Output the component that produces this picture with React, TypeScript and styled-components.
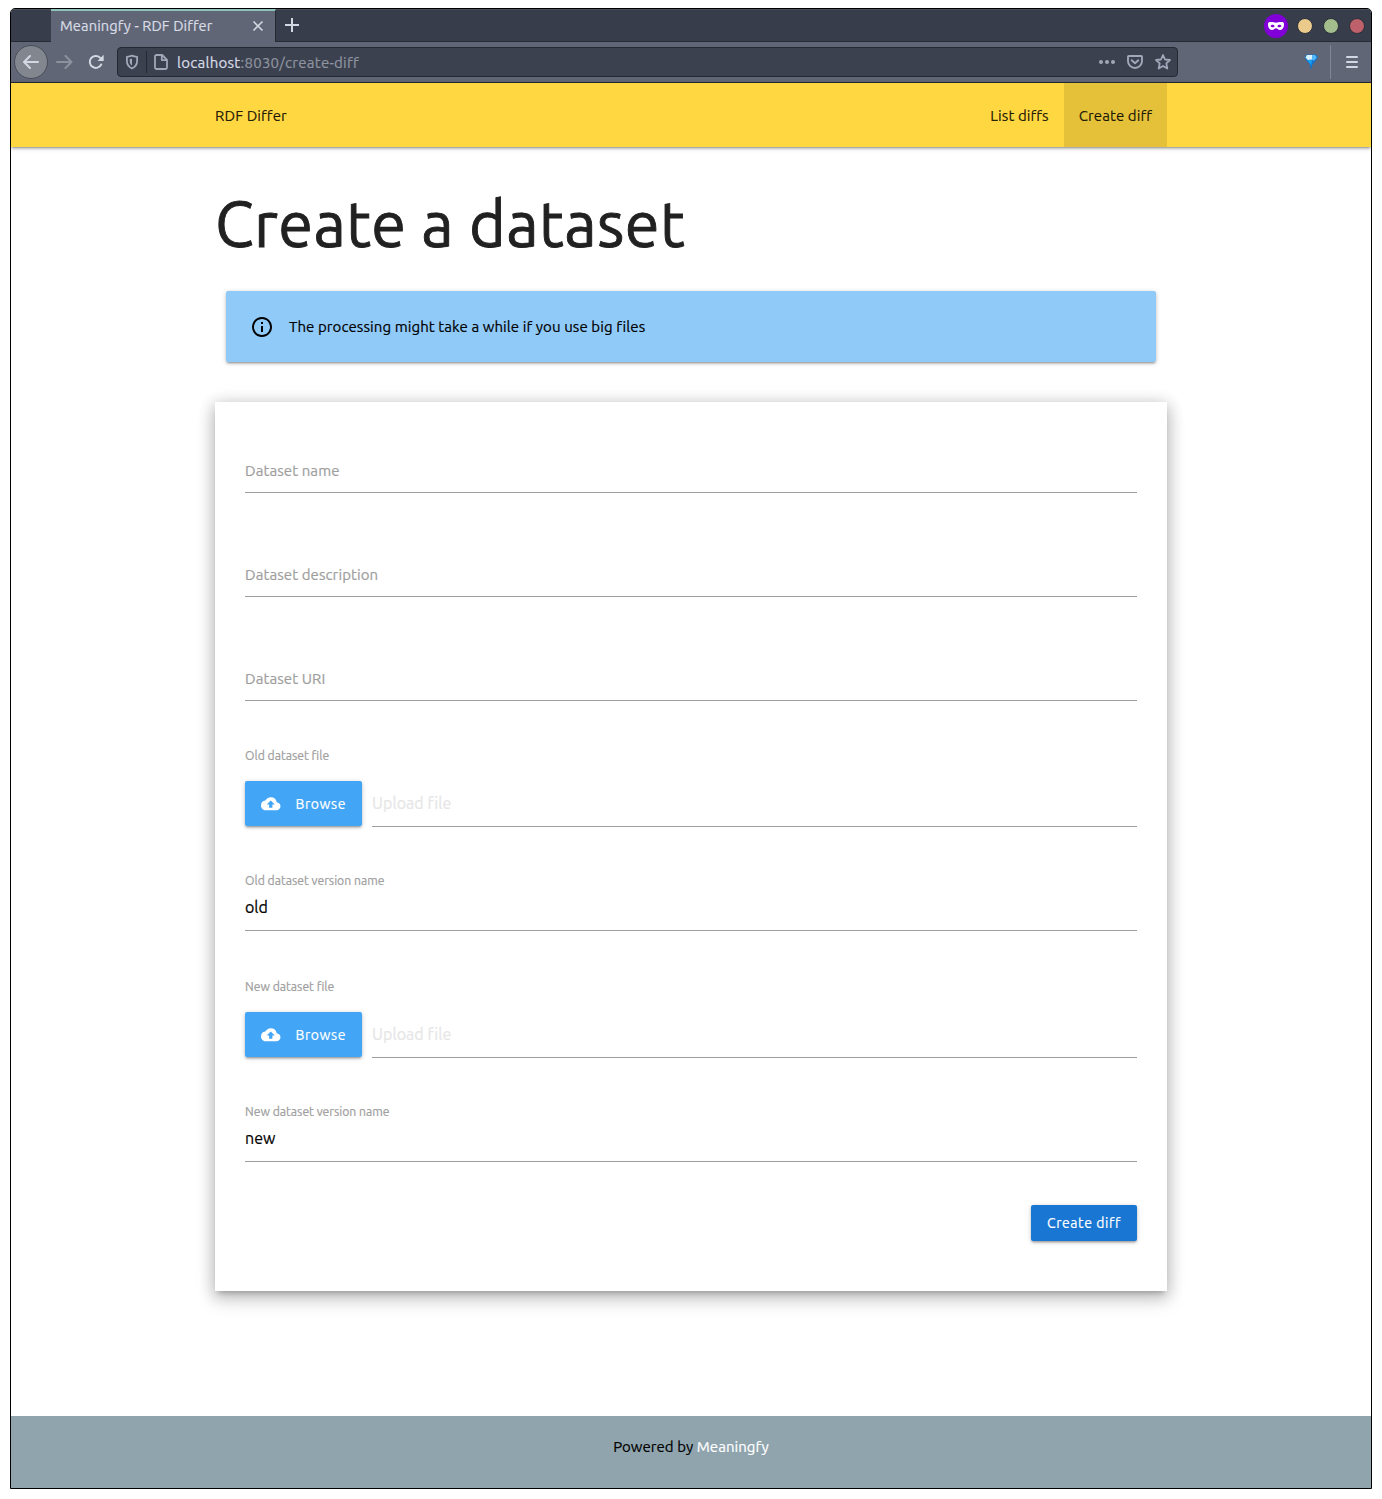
import React from 'react';
import styled, { createGlobalStyle } from 'styled-components';
import { MdCloudUpload, MdInfoOutline } from 'react-icons/md';

const GlobalStyle = createGlobalStyle`
  *, *::before, *::after { box-sizing: border-box; }
  body {
    margin: 0;
    background: #fff;
    color: rgba(0, 0, 0, 0.87);
    font-family: Ubuntu, "Noto Sans", "Open Sans", sans-serif;
    font-size: 15px;
    line-height: 22px;
    -webkit-text-stroke: 0.2px;
  }
  svg { display: block; flex: none; }
`;

const shadow1 =
  '0 2px 2px 0 rgba(0,0,0,0.14), 0 3px 1px -2px rgba(0,0,0,0.12), 0 1px 5px 0 rgba(0,0,0,0.2)';
const shadow3 =
  '0 8px 17px 2px rgba(0,0,0,0.14), 0 3px 14px 2px rgba(0,0,0,0.12), 0 5px 5px -3px rgba(0,0,0,0.2), 0 0 20px rgba(0,0,0,0.06)';

const Window = styled.div`
  display: flex;
  flex-direction: column;
  width: 1362px;
  height: 1481px;
  margin: 8px 10px 10px;
  border: 1px solid #000;
  border-radius: 5px 5px 0 0;
  overflow: hidden;
  background: #fff;
`;

const TabStrip = styled.div`
  display: flex;
  height: 33px;
  flex: none;
  padding-left: 40px;
  background: #373d4a;
  border-bottom: 1px solid #252a35;
  box-shadow: inset 0 1px 0 #4a505c;
`;

const Tab = styled.div`
  display: flex;
  align-items: center;
  justify-content: space-between;
  width: 225px;
  height: 33px;
  padding: 0 11px 1px 9px;
  background: #606675;
  border-top: 2px solid #8fc1bd;
  border-right: 1px solid #252a35;
  color: #d8dce6;
  font-size: 14.67px;
  letter-spacing: 0.1px;
`;

const NewTab = styled.div`
  display: flex;
  align-items: center;
  padding-left: 8px;
`;

const WindowControls = styled.div`
  display: flex;
  align-items: center;
  margin-left: auto;
  padding: 1px 6px 0 0;
`;

const PrivateBadge = styled.div`
  display: grid;
  place-items: center;
  width: 24px;
  height: 24px;
  margin-right: 9px;
  border-radius: 50%;
  background: #8000d7;
`;

const ControlDot = styled.div<{ $color: string }>`
  width: 16px;
  height: 16px;
  border: 1px solid #2b303b;
  border-radius: 50%;
  background: ${(p) => p.$color};
  & + & { margin-left: 10px; }
`;

const Toolbar = styled.div`
  display: flex;
  align-items: center;
  height: 41px;
  flex: none;
  background: #606675;
  border-bottom: 1px solid #252a35;
`;

const BackButton = styled.div`
  display: grid;
  place-items: center;
  width: 34px;
  height: 34px;
  margin: 0 7px 0 3px;
  border: 1px solid #484d59;
  border-radius: 50%;
  background: #82868f;
`;

const ReloadIcon = styled.svg`
  margin: 0 13px 0 15px;
`;

const AddressBar = styled.div`
  display: flex;
  align-items: center;
  width: 1061px;
  height: 30px;
  padding: 0 6px;
  border: 1px solid #232833;
  border-radius: 4px;
  background: #3c4150;
`;

const BarDivider = styled.div`
  width: 1px;
  height: 22px;
  margin: 0 6px;
  background: #232833;
`;

const Address = styled.div`
  margin: 1px auto 0 8px;
  color: #8f949f;
  font-size: 15px;
  letter-spacing: 0.27px;
  strong { color: #d8dce6; font-weight: inherit; }
`;

const AddressActions = styled.div`
  display: flex;
  align-items: center;
  gap: 12px;
`;

const ToolbarEnd = styled.div`
  display: flex;
  align-items: center;
  margin-left: auto;
  padding-right: 12px;
`;

const ToolbarDivider = styled.div`
  width: 1px;
  height: 34px;
  margin: 0 14px 0 11px;
  background: #80858f;
`;

const Nav = styled.nav`
  flex: none;
  height: 64px;
  background: #ffd740;
  box-shadow: ${shadow1};
`;

const Container = styled.div`
  width: 952px;
  margin: 0 auto;
`;

const NavRow = styled(Container)`
  display: flex;
  line-height: 65px;
  height: 64px;
  letter-spacing: 0.09px;
`;

const Brand = styled.span`
  margin-right: auto;
`;

const NavLink = styled.a<{ $active?: boolean }>`
  padding: 0 15px;
  background: ${(p) => (p.$active ? 'rgba(0,0,0,0.1)' : 'transparent')};
`;

const Main = styled.main`
  display: flow-root;
  flex: 1;
`;

const Title = styled.h1`
  margin: 42px 0 33px;
  color: #212121;
  font-size: 63px;
  font-weight: 400;
  line-height: 69px;
  letter-spacing: 0.42px;
  white-space: nowrap;
  -webkit-text-stroke: 0.9px;
`;

const Notice = styled.div`
  display: flex;
  align-items: center;
  gap: 15px;
  height: 71px;
  margin: 0 11px 40px;
  padding: 0 24px;
  border-radius: 2px;
  background: #90caf9;
  box-shadow: ${shadow1};
  color: #000;
  letter-spacing: 0.09px;
`;

const Form = styled.form`
  padding: 45px 30px 50px;
  box-shadow: ${shadow3};
`;

const EmptyField = styled.div`
  height: 46px;
  margin-bottom: 58px;
  border-bottom: 1px solid #9e9e9e;
  color: #9e9e9e;
  line-height: 48px;
  letter-spacing: 0.09px;
  &:nth-child(3) { margin-bottom: 45px; }
`;

const SmallLabel = styled.div`
  height: 18px;
  color: #9e9e9e;
  font-size: 12.2px;
  line-height: 19px;
`;

const FileRow = styled.div`
  display: flex;
  gap: 10px;
  margin: 17px 0 44px;
`;

const Button = styled.button<{ $primary?: boolean }>`
  display: flex;
  align-items: center;
  gap: 15px;
  height: ${(p) => (p.$primary ? 36 : 45)}px;
  width: ${(p) => (p.$primary ? 106 : 117)}px;
  margin: ${(p) => (p.$primary ? '0 0 0 auto' : '0')};
  padding: 0 16px;
  border: 0;
  border-radius: 2px;
  background: ${(p) => (p.$primary ? '#1976d2' : '#42a5f5')};
  box-shadow: ${shadow1};
  color: #fff;
  font: inherit;
  font-size: 14px;
  letter-spacing: 0.58px;
  white-space: nowrap;
`;

const FilePath = styled.div`
  flex: 1;
  height: 46px;
  border-bottom: 1px solid #9e9e9e;
  color: #e6e6e6;
  font-size: 16px;
  line-height: 45px;
  letter-spacing: 0.06px;
`;

const Value = styled.div<{ $after: number }>`
  height: 42px;
  margin-bottom: ${(p) => p.$after}px;
  border-bottom: 1px solid #9e9e9e;
  color: #000;
  font-size: 16px;
  line-height: 36px;
`;

const Footer = styled.footer`
  flex: none;
  height: 72px;
  padding-top: 20px;
  background: #90a4ae;
  color: #000;
  text-align: center;
  letter-spacing: 0.05px;
  a { color: #fff; }
`;

function FileField({ label }: { label: string }) {
  return (
    <>
      <SmallLabel>{label}</SmallLabel>
      <FileRow>
        <Button type="button">
          <MdCloudUpload size={19.5} />
          Browse
        </Button>
        <FilePath>Upload file</FilePath>
      </FileRow>
    </>
  );
}

function VersionField({ label, value, after }: { label: string; value: string; after: number }) {
  return (
    <>
      <SmallLabel>{label}</SmallLabel>
      <Value $after={after}>{value}</Value>
    </>
  );
}

function BrowserChrome() {
  return (
    <>
      <TabStrip>
        <Tab>
          Meaningfy - RDF Differ
          <svg width="12" height="12" viewBox="0 0 12 12" stroke="#d3d7e2" strokeWidth="1.6">
            <path d="M1.5 1.5 10.5 10.5M10.5 1.5 1.5 10.5" />
          </svg>
        </Tab>
        <NewTab>
          <svg width="16" height="16" viewBox="0 0 16 16" stroke="#d3d7e2" strokeWidth="2">
            <path d="M8 1v14M1 8h14" />
          </svg>
        </NewTab>
        <WindowControls>
          <PrivateBadge>
            <svg width="16" height="8" viewBox="0 0 16 8">
              <path
                fill="#fff"
                fillRule="evenodd"
                d="M0 2C0 .6 1 .1 2.300.1 4.800 0 6.500.8 8 .8S11.200 0 13.700.1C15 .1 16 .6 16 2c0 3.500-1.500 6-4 6-2 0-2.800-1.700-4-1.700S6 8 4 8C1.500 8 0 5.500 0 2ZM2.500 4.100C3 5 3.900 5.400 4.800 5.300 5.800 5.200 6.400 4.600 6.600 4.200 6.100 3.300 5.300 2.800 4.400 2.800 3.500 2.800 2.800 3.400 2.500 4.100ZM13.500 4.100C13 5 12.100 5.400 11.200 5.300 10.200 5.200 9.600 4.600 9.400 4.200 9.900 3.300 10.700 2.800 11.600 2.800 12.500 2.800 13.200 3.400 13.500 4.100Z"
              />
            </svg>
          </PrivateBadge>
          <ControlDot $color="#ebcb8b" />
          <ControlDot $color="#a3be8c" />
          <ControlDot $color="#bf616a" />
        </WindowControls>
      </TabStrip>
      <Toolbar>
        <BackButton>
          <svg width="16" height="14" viewBox="0 0 16 14" fill="none" stroke="#d3d7e2" strokeWidth="2" strokeLinecap="round" strokeLinejoin="round">
            <path d="M15 7H1.500M7 1 1 7l6 6" />
          </svg>
        </BackButton>
        <svg width="18" height="14" viewBox="0 0 18 14" fill="none" stroke="#8d929f" strokeWidth="2" strokeLinecap="round" strokeLinejoin="round">
          <path d="M2 7h14.500M10.500 1l6 6-6 6" />
        </svg>
        <ReloadIcon width="16" height="16" viewBox="0 0 16 16" fill="none">
          <path d="M13.200 10.500A6 6 0 1 1 12 3.600L14 5.500" stroke="#d3d7e2" strokeWidth="2" strokeLinecap="round" />
          <path d="M15.700.8V7H9.500Z" fill="#d3d7e2" />
        </ReloadIcon>
        <AddressBar>
          <svg width="16" height="16" viewBox="0 0 16 16" fill="none" stroke="#a1a7b8">
            <path d="M8 1.600c1.700.8 3.400 1.100 5.100 1.200v4c0 3.400-1.800 6.200-5.100 7.700C4.700 13 2.900 10.200 2.900 6.800v-4C4.600 2.700 6.300 2.400 8 1.600Z" strokeWidth="1.800" strokeLinejoin="round" />
            <path d="M8 4.400v7.200C6.500 10.600 5.700 9 5.700 6.900V5C6.500 4.900 7.300 4.700 8 4.400Z" fill="#a1a7b8" stroke="none" />
          </svg>
          <BarDivider />
          <svg width="16" height="16" viewBox="0 0 16 16" fill="none" stroke="#a1a7b8" strokeWidth="1.800" strokeLinejoin="round">
            <path d="M3.500 1h5.700L14 5.800v7.700c0 .8-.7 1.500-1.500 1.500h-9C2.700 15 2 14.300 2 13.500v-11C2 1.700 2.700 1 3.500 1ZM8.800 1.200v4.900h5" />
          </svg>
          <Address>
            <strong>localhost</strong>:8030/create-diff
          </Address>
          <AddressActions>
            <svg width="16" height="16" viewBox="0 0 16 16" fill="#a1a7b8">
              <circle cx="2" cy="8" r="2" />
              <circle cx="8" cy="8" r="2" />
              <circle cx="14" cy="8" r="2" />
            </svg>
            <svg width="16" height="16" viewBox="0 0 16 16" fill="none" stroke="#a1a7b8" strokeWidth="1.900" strokeLinecap="round" strokeLinejoin="round">
              <path d="M1.800 2h12.400c.5 0 .8.300.8.800V7A7 7 0 0 1 1 7V2.800c0-.5.3-.8.8-.8ZM4.700 6.200 8 9.300l3.300-3.100" />
            </svg>
            <svg width="16" height="16" viewBox="0 0 16 16" fill="none" stroke="#a1a7b8" strokeWidth="1.800" strokeLinejoin="round">
              <path d="m8 1 2 4.500 5 .5-3.700 3.400 1 5.100L8 11.900l-4.300 2.600 1-5.100L1 6l5-.5Z" />
            </svg>
          </AddressActions>
        </AddressBar>
        <ToolbarEnd>
          <svg width="16" height="16" viewBox="0 0 16 16">
            <path d="M3.500.5h9.500L15 3.500 9 11.500v3H7.200v-3L1.500 3.500Z" fill="#1173cc" />
            <path d="M4 1h5.500L9 5.500 4.800 6 2.500 3.500Z" fill="#d8f1ff" />
            <path d="M9.500 1H12l1.800 2.500L11 6.500 9 6Z" fill="#55bbff" />
            <path d="M4.300 6H9l-.8 5.500Z" fill="#19a0f0" />
          </svg>
          <ToolbarDivider />
          <svg width="14" height="14" viewBox="0 0 14 14" stroke="#d3d7e2" strokeWidth="2" strokeLinecap="round">
            <path d="M2 2h10M2 7h10M2 12h10" />
          </svg>
        </ToolbarEnd>
      </Toolbar>
    </>
  );
}

export default function App() {
  return (
    <>
      <GlobalStyle />
      <Window>
        <BrowserChrome />
        <Nav>
          <NavRow>
            <Brand>RDF Differ</Brand>
            <NavLink>List diffs</NavLink>
            <NavLink $active>Create diff</NavLink>
          </NavRow>
        </Nav>
        <Main>
          <Container>
            <Title>Create a dataset</Title>
            <Notice>
              <MdInfoOutline size={24} />
              The processing might take a while if you use big files
            </Notice>
            <Form>
              <EmptyField>Dataset name</EmptyField>
              <EmptyField>Dataset description</EmptyField>
              <EmptyField>Dataset URI</EmptyField>
              <FileField label="Old dataset file" />
              <VersionField label="Old dataset version name" value="old" after={46} />
              <FileField label="New dataset file" />
              <VersionField label="New dataset version name" value="new" after={43} />
              <Button type="button" $primary>
                Create diff
              </Button>
            </Form>
          </Container>
        </Main>
        <Footer>
          Powered by <a>Meaningfy</a>
        </Footer>
      </Window>
    </>
  );
}
